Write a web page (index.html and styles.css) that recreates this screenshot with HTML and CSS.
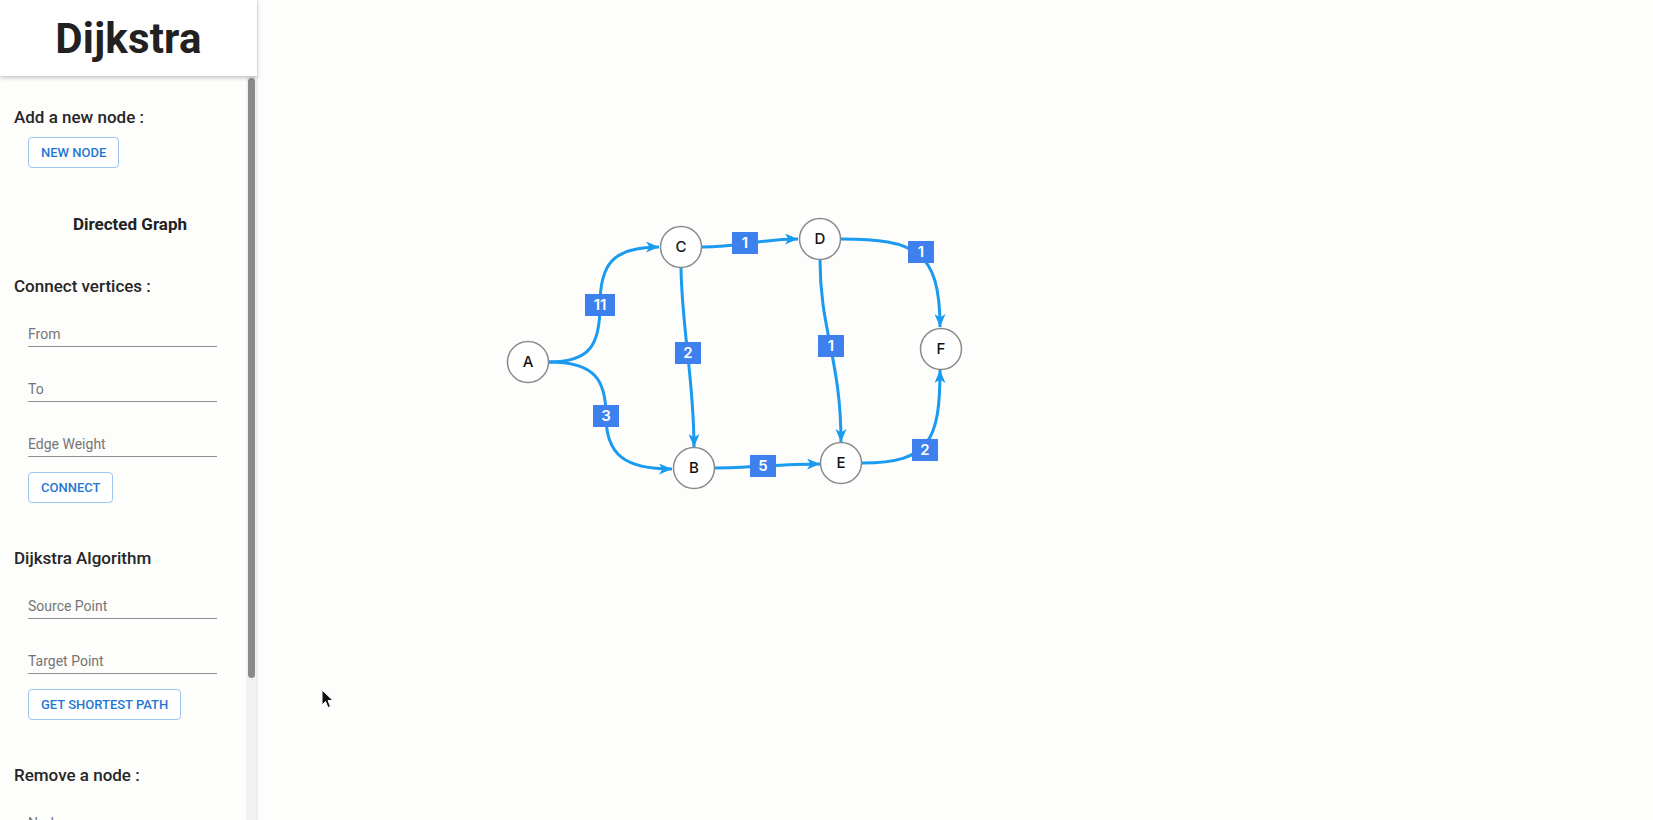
FILE: index.html
```html
<!DOCTYPE html>
<html lang="en">
<head>
  <meta charset="UTF-8">
  <meta name="viewport" content="width=device-width, initial-scale=1.0">
  <title>Dijkstra</title>
  <link rel="stylesheet" href="styles.css">
</head>
<body>
  <aside class="sidebar">
    <header class="brand">
      <h1>Dijkstra</h1>
    </header>

    <div class="sidebar-body">
      <div class="panel">
        <h3 class="section-title first">Add a new node :</h3>
        <button class="btn">New Node</button>

        <h3 class="graph-type">Directed Graph</h3>

        <h3 class="section-title">Connect vertices :</h3>
        <input class="field" type="text" placeholder="From">
        <input class="field" type="text" placeholder="To">
        <input class="field" type="text" placeholder="Edge Weight">
        <button class="btn">Connect</button>

        <h3 class="section-title">Dijkstra Algorithm</h3>
        <input class="field" type="text" placeholder="Source Point">
        <input class="field" type="text" placeholder="Target Point">
        <button class="btn">Get Shortest Path</button>

        <h3 class="section-title">Remove a node :</h3>
        <input class="field" type="text" placeholder="Node">
        <button class="btn">Remove Node</button>
      </div>
      <div class="scroll-track"><div class="scroll-thumb"></div></div>
    </div>
  </aside>

  <main class="canvas">
    <svg class="graph" viewBox="258 0 1395 820" xmlns="http://www.w3.org/2000/svg">
      <defs>
        <marker id="arrow" viewBox="0 0 13 11" refX="13" refY="5.5" markerWidth="13" markerHeight="11" markerUnits="userSpaceOnUse" orient="auto">
          <path d="M0,0 L13,5.5 L0,11 L3.5,5.5 Z" fill="#1a9bf0"/>
        </marker>
      </defs>

      <!-- edges -->
      <g class="edges" marker-end="url(#arrow)">
        <path d="M549,362 C590,362 600,345 600,305 C600,265 612,247 659,247"/>
        <path d="M549,362 C595,362 606,380 606,416 C606,455 625,469 672,469"/>
        <path d="M681,268 C682,330 694,380 694,447"/>
        <path d="M702,247 C740,247 760,239 798,239"/>
        <path d="M841,239 C915,239 940,250 940,327"/>
        <path d="M820,260 C820,330 841,360 841,442"/>
        <path d="M715,468 C750,468 780,464 820,464"/>
        <path d="M862,463 C930,463 940,440 940,370"/>
      </g>

      <!-- weights -->
      <g class="weights">
        <rect x="585" y="294" width="30" height="22"/><text x="600" y="310">11</text>
        <rect x="593" y="405" width="26" height="22"/><text x="606" y="421">3</text>
        <rect x="675" y="342" width="26" height="22"/><text x="688" y="358">2</text>
        <rect x="732" y="232" width="26" height="22"/><text x="745" y="248">1</text>
        <rect x="908" y="241" width="26" height="22"/><text x="921" y="257">1</text>
        <rect x="818" y="335" width="26" height="22"/><text x="831" y="351">1</text>
        <rect x="750" y="455" width="26" height="22"/><text x="763" y="471">5</text>
        <rect x="912" y="439" width="26" height="22"/><text x="925" y="455">2</text>
      </g>

      <!-- nodes -->
      <g class="nodes">
        <circle cx="528" cy="362" r="20.5"/><text x="528" y="367">A</text>
        <circle cx="681" cy="247" r="20.5"/><text x="681" y="252">C</text>
        <circle cx="820" cy="239" r="20.5"/><text x="820" y="244">D</text>
        <circle cx="941" cy="349" r="20.5"/><text x="941" y="354">F</text>
        <circle cx="694" cy="468" r="20.5"/><text x="694" y="473">B</text>
        <circle cx="841" cy="463" r="20.5"/><text x="841" y="468">E</text>
      </g>
    </svg>

    <svg class="pointer" width="14" height="20" viewBox="0 0 14 20" xmlns="http://www.w3.org/2000/svg">
      <path d="M1,1 L1,16 L4.5,12.5 L7,18.5 L9.5,17.5 L7,11.5 L12,11.5 Z" fill="#111" stroke="#fff" stroke-width="1"/>
    </svg>
  </main>
</body>
</html>
```

FILE: styles.css
```css
:root {
  --btn-blue: #1f78d1;
  --btn-border: #9cc6ef;
  --edge-blue: #1a9bf0;
  --weight-blue: #3d80ee;
  --text-dark: #222;
  --text-muted: #757575;
}
html, body {
  margin: 0;
  height: 100%;
}
body {
  display: flex;
  font-family: Roboto, "Noto Sans", sans-serif;
  color: var(--text-dark);
  background: #fdfdfb;
  overflow: hidden;
}
.sidebar {
  width: 258px;
  height: 100vh;
  display: flex;
  flex-direction: column;
  background: #fdfdfc;
  border-right: 1px solid #ececec;
  box-sizing: border-box;
  flex-shrink: 0;
}
.brand {
  height: 76px;
  background: #fff;
  display: flex;
  align-items: center;
  justify-content: center;
  box-shadow: 0 2px 4px rgba(0, 0, 0, 0.22);
  position: relative;
  z-index: 1;
  flex-shrink: 0;
}
.brand h1 {
  margin: 0;
  font-size: 42px;
  font-weight: 700;
  color: #212121;
  letter-spacing: 0.2px;
}
.sidebar-body {
  flex: 1;
  min-height: 0;
  display: flex;
}
.panel {
  flex: 1;
  overflow: hidden;
  padding: 31px 0 0 14px;
  display: flex;
  flex-direction: column;
  align-items: flex-start;
}
.panel > * {
  flex-shrink: 0;
}
.scroll-track {
  width: 11px;
  background: #f1f1f1;
  padding: 2px 2px 0;
  box-sizing: border-box;
  flex-shrink: 0;
}
.scroll-thumb {
  height: 600px;
  background: #8a8a8a;
  border-radius: 4px;
}
.section-title {
  margin: 45px 0 0;
  font-size: 17px;
  line-height: 20px;
  font-weight: 500;
  color: #262626;
}
.section-title.first {
  margin-top: 0;
}
.graph-type {
  align-self: stretch;
  text-align: center;
  margin: 46px 0 0;
  font-size: 17px;
  line-height: 20px;
  font-weight: 700;
  color: #222;
}
.graph-type + .section-title {
  margin-top: 42px;
}
.btn {
  margin: 10px 0 0 14px;
  height: 31px;
  padding: 0 12px;
  background: #fff;
  border: 1px solid var(--btn-border);
  border-radius: 4px;
  color: var(--btn-blue);
  font-family: Roboto, sans-serif;
  font-size: 13px;
  font-weight: 500;
  letter-spacing: 0;
  text-transform: uppercase;
  cursor: pointer;
}
.field + .btn {
  margin-top: 15px;
}
.field {
  display: block;
  width: 189px;
  height: 30px;
  margin: 25px 0 0 14px;
  padding: 4px 0 0;
  box-sizing: border-box;
  border: none;
  border-bottom: 1px solid #8f8f8f;
  background: transparent;
  font-family: Roboto, sans-serif;
  font-size: 14px;
  color: var(--text-dark);
  outline: none;
}
.section-title + .field {
  margin-top: 21px;
}
.field::placeholder {
  color: var(--text-muted);
}
.canvas {
  flex: 1;
  position: relative;
  height: 100vh;
}
.graph {
  display: block;
  width: 100%;
  height: 100%;
}
.edges path {
  fill: none;
  stroke: var(--edge-blue);
  stroke-width: 3;
}
.weights rect {
  fill: var(--weight-blue);
}
.weights text {
  fill: #fff;
  font-family: Inter, Roboto, sans-serif;
  font-size: 15px;
  font-weight: 600;
  text-anchor: middle;
}
.nodes circle {
  fill: #fff;
  stroke: #8a8a8a;
  stroke-width: 1.5;
}
.nodes text {
  fill: #111;
  font-family: Inter, Roboto, sans-serif;
  font-size: 15px;
  font-weight: 500;
  text-anchor: middle;
}
.pointer {
  position: absolute;
  left: 63px;
  top: 689px;
}
```
